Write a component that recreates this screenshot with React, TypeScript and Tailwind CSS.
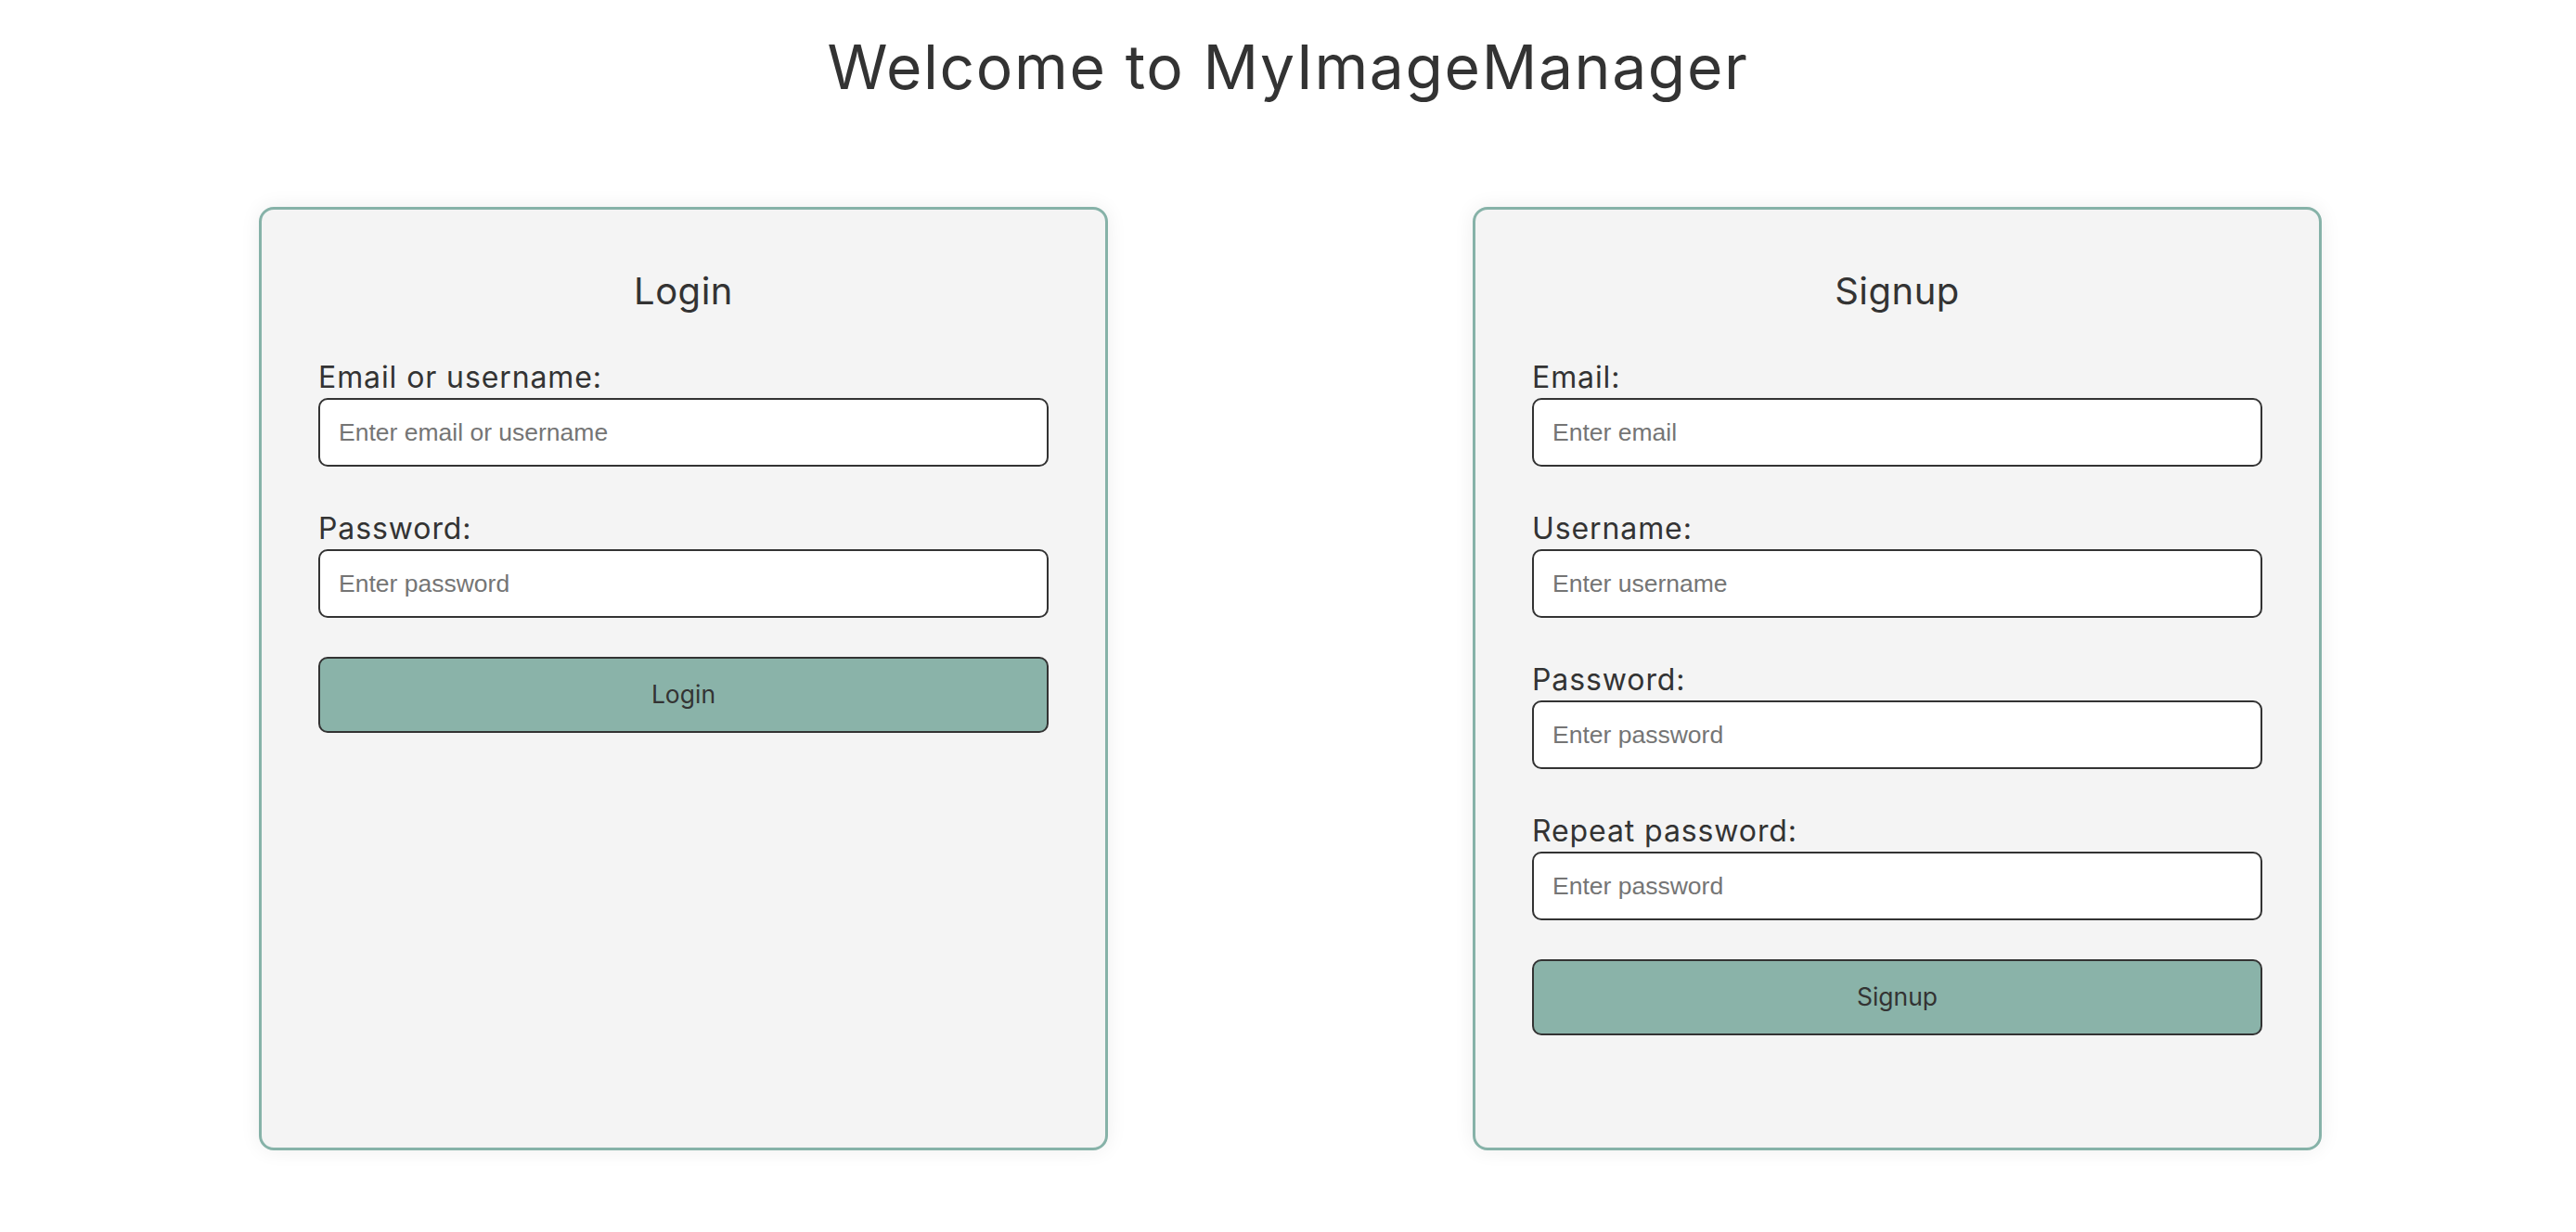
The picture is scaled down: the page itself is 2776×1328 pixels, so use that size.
type Field = {
  label: string;
  placeholder: string;
  type?: string;
};

type AuthCardProps = {
  title: string;
  fields: Field[];
  button: string;
};

function AuthCard({ title, fields, button }: AuthCardProps) {
  return (
    <form
      className="flex h-[1017px] w-[915px] flex-col rounded-[16px] border-[3px] border-[#86b2a8] bg-[#f4f4f4] px-[61px] pt-[64px] shadow-[0_0_22px_rgba(0,0,0,0.07)]"
      onSubmit={(e) => e.preventDefault()}
    >
      <h2 className="text-center text-[40px] leading-[48px] tracking-[0.5px] text-[#333]">{title}</h2>
      <div className="mt-[48px] flex flex-col gap-[46px]">
        {fields.map((field) => (
          <label key={field.label} className="flex flex-col gap-[3px]">
            <span className="pt-[2px] text-[32px] leading-[38px] tracking-[0.9px] text-[#333]">
              {field.label}
            </span>
            <input
              type={field.type ?? "text"}
              placeholder={field.placeholder}
              className="h-[74px] w-full rounded-[10px] border-2 border-[#333] bg-white pl-[20px] font-['Liberation_Sans',Arial,sans-serif] text-[26.5px] text-[#333] outline-none placeholder:text-[#757575]"
            />
          </label>
        ))}
      </div>
      <button
        type="submit"
        className="mt-[42px] h-[82px] w-full rounded-[10px] border-2 border-[#333] bg-[#8ab3a9] text-[26.5px] text-[#333]"
      >
        {button}
      </button>
    </form>
  );
}

export default function App() {
  return (
    <div className="min-h-screen bg-white pt-[32px] font-['Inter',sans-serif] text-[#333]">
      <h1 className="text-center text-[66px] leading-[80px] tracking-[1.6px]">Welcome to MyImageManager</h1>
      <div className="mt-[111px] flex gap-[393px] pl-[279px]">
        <AuthCard
          title="Login"
          button="Login"
          fields={[
            { label: "Email or username:", placeholder: "Enter email or username" },
            { label: "Password:", placeholder: "Enter password", type: "password" },
          ]}
        />
        <AuthCard
          title="Signup"
          button="Signup"
          fields={[
            { label: "Email:", placeholder: "Enter email", type: "email" },
            { label: "Username:", placeholder: "Enter username" },
            { label: "Password:", placeholder: "Enter password", type: "password" },
            { label: "Repeat password:", placeholder: "Enter password", type: "password" },
          ]}
        />
      </div>
    </div>
  );
}
